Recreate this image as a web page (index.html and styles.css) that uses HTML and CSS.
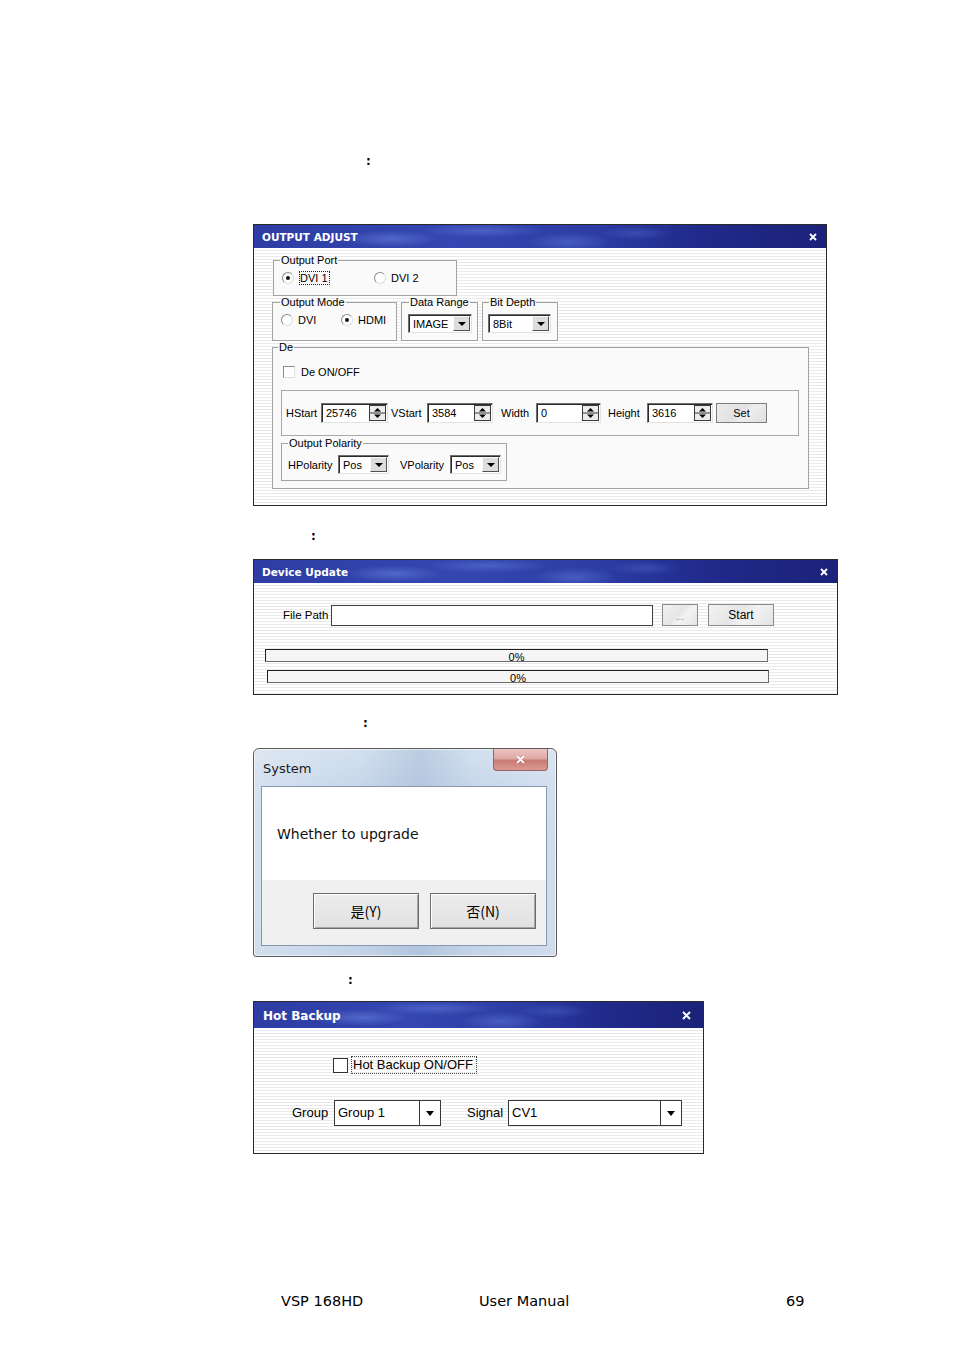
FILE: index.html
```html
<!DOCTYPE html>
<html lang="en">
<head>
<meta charset="utf-8">
<title>VSP 168HD User Manual</title>
<link rel="stylesheet" href="styles.css">
</head>
<body>
<div class="page">
  <p class="colon colon-1">:</p>

  <section class="win win-adjust">
    <header class="xp-title">
      <span class="xp-title-text">OUTPUT ADJUST</span>
      <svg class="xp-close" width="8" height="8" viewBox="0 0 8 8"><path d="M1 1L7 7M7 1L1 7" stroke="#fff" stroke-width="1.9"/></svg>
    </header>
    <div class="xp-body adjust-body">
      <fieldset class="grp grp-port">
        <legend>Output Port</legend>
        <div class="radio-row port-row">
          <span class="radio-item"><span class="radio on"></span><span class="focus">DVI 1</span></span>
          <span class="radio-item"><span class="radio"></span><span>DVI 2</span></span>
        </div>
      </fieldset>
      <div class="row2">
        <fieldset class="grp grp-mode">
          <legend>Output Mode</legend>
          <div class="radio-row mode-row">
            <span class="radio-item"><span class="radio"></span><span>DVI</span></span>
            <span class="radio-item"><span class="radio on"></span><span>HDMI</span></span>
          </div>
        </fieldset>
        <fieldset class="grp grp-range">
          <legend>Data Range</legend>
          <div class="select sel-image"><span class="sel-txt">IMAGE</span><span class="drop"></span></div>
        </fieldset>
        <fieldset class="grp grp-depth">
          <legend>Bit Depth</legend>
          <div class="select sel-bit"><span class="sel-txt">8Bit</span><span class="drop"></span></div>
        </fieldset>
      </div>
      <fieldset class="grp grp-de">
        <legend>De</legend>
        <div class="check-item"><span class="check"></span><span>De ON/OFF</span></div>
        <div class="de-box">
          <span class="lbl">HStart</span>
          <div class="spin"><span class="spin-txt">25746</span><svg class="spin-btn" width="17" height="16" viewBox="0 0 17 16"><rect x="0.5" y="0.5" width="16" height="15" fill="#ececec" stroke="#3a3a3a"/><path d="M1 8H16" stroke="#3a3a3a"/><path d="M5 6.5H12L8.5 3Z" fill="#000"/><path d="M5 9.5H12L8.5 13Z" fill="#000"/></svg></div>
          <span class="lbl lbl-v">VStart</span>
          <div class="spin"><span class="spin-txt">3584</span><svg class="spin-btn" width="17" height="16" viewBox="0 0 17 16"><rect x="0.5" y="0.5" width="16" height="15" fill="#ececec" stroke="#3a3a3a"/><path d="M1 8H16" stroke="#3a3a3a"/><path d="M5 6.5H12L8.5 3Z" fill="#000"/><path d="M5 9.5H12L8.5 13Z" fill="#000"/></svg></div>
          <span class="lbl lbl-w">Width</span>
          <div class="spin"><span class="spin-txt">0</span><svg class="spin-btn" width="17" height="16" viewBox="0 0 17 16"><rect x="0.5" y="0.5" width="16" height="15" fill="#ececec" stroke="#3a3a3a"/><path d="M1 8H16" stroke="#3a3a3a"/><path d="M5 6.5H12L8.5 3Z" fill="#000"/><path d="M5 9.5H12L8.5 13Z" fill="#000"/></svg></div>
          <span class="lbl lbl-h">Height</span>
          <div class="spin"><span class="spin-txt">3616</span><svg class="spin-btn" width="17" height="16" viewBox="0 0 17 16"><rect x="0.5" y="0.5" width="16" height="15" fill="#ececec" stroke="#3a3a3a"/><path d="M1 8H16" stroke="#3a3a3a"/><path d="M5 6.5H12L8.5 3Z" fill="#000"/><path d="M5 9.5H12L8.5 13Z" fill="#000"/></svg></div>
          <button class="set-btn" type="button">Set</button>
        </div>
        <fieldset class="grp grp-pol">
          <legend>Output Polarity</legend>
          <div class="pol-row">
            <span class="lbl">HPolarity</span>
            <div class="select sel-pol"><span class="sel-txt">Pos</span><span class="drop"></span></div>
            <span class="lbl lbl-vp">VPolarity</span>
            <div class="select sel-pol"><span class="sel-txt">Pos</span><span class="drop"></span></div>
          </div>
        </fieldset>
      </fieldset>
    </div>
  </section>

  <p class="colon colon-2">:</p>

  <section class="win win-update">
    <header class="xp-title">
      <span class="xp-title-text">Device Update</span>
      <svg class="xp-close" width="8" height="8" viewBox="0 0 8 8"><path d="M1 1L7 7M7 1L1 7" stroke="#fff" stroke-width="1.9"/></svg>
    </header>
    <div class="xp-body update-body">
      <div class="file-row">
        <span class="file-lbl">File Path</span>
        <div class="file-input"></div>
        <button class="btn-flat btn-dots" type="button">...</button>
        <button class="btn-flat btn-start" type="button">Start</button>
      </div>
      <div class="bar bar-1"><span>0%</span></div>
      <div class="bar bar-2"><span>0%</span></div>
    </div>
  </section>

  <p class="colon colon-3">:</p>

  <section class="sys">
    <header class="sys-title">
      <span class="sys-title-text">System</span>
      <span class="sys-close"><svg width="11" height="9" viewBox="0 0 11 9"><path d="M2 1L9 8M9 1L2 8" stroke="#7a3a36" stroke-width="3" opacity="0.35"/><path d="M2 1L9 8M9 1L2 8" stroke="#fff" stroke-width="1.8"/></svg></span>
    </header>
    <div class="sys-client">
      <div class="sys-msg">Whether to upgrade</div>
      <div class="sys-actions">
        <button class="sys-btn" type="button">是(Y)</button>
        <button class="sys-btn" type="button">否(N)</button>
      </div>
    </div>
  </section>

  <p class="colon colon-4">:</p>

  <section class="win win-hot">
    <header class="xp-title hot-title">
      <span class="xp-title-text">Hot Backup</span>
      <svg class="xp-close" width="9" height="9" viewBox="0 0 9 9"><path d="M1 1L8 8M8 1L1 8" stroke="#fff" stroke-width="2"/></svg>
    </header>
    <div class="xp-body hot-body">
      <div class="hot-check"><span class="hot-box"></span><span class="hot-focus">Hot Backup ON/OFF</span></div>
      <div class="hot-row">
        <span class="hot-lbl">Group</span>
        <div class="hot-select hs-group"><span class="sel-txt">Group 1</span><span class="hot-drop"></span></div>
        <span class="hot-lbl hot-lbl-sig">Signal</span>
        <div class="hot-select hs-signal"><span class="sel-txt">CV1</span><span class="hot-drop"></span></div>
      </div>
    </div>
  </section>

  <footer class="foot">
    <span>VSP 168HD</span>
    <span>User Manual</span>
    <span>69</span>
  </footer>
</div>
</body>
</html>
```

FILE: styles.css
```css
* { box-sizing: border-box; }
html, body { margin: 0; padding: 0; background: #fff; }
body { font-family: "Liberation Sans", Arial, sans-serif; color: #000; }

.page { width: 954px; height: 1350px; padding-top: 153px; overflow: hidden; }

.colon { margin: 0; height: 16px; font: bold 12px/16px "DejaVu Sans", sans-serif; }
.colon-1 { margin-left: 366px; }
.colon-2 { margin-left: 311px; margin-top: 22px; }
.colon-3 { margin-left: 363px; margin-top: 20px; }
.colon-4 { margin-left: 348px; margin-top: 15px; }

/* ---------- XP style windows ---------- */
.win { margin-left: 253px; border: 1px solid #2a2a2a; background: #fff; display: flex; flex-direction: column; }
.win-adjust { width: 574px; height: 282px; margin-top: 55px; }
.win-update { width: 585px; height: 136px; margin-top: 15px; }
.win-hot { width: 451px; height: 153px; margin-top: 13px; }

.xp-title {
  height: 23px; flex: none;
  display: flex; align-items: center; justify-content: space-between;
  padding: 1px 9px 0 8px;
  color: #fff;
  background:
    radial-gradient(ellipse 70px 12px at 24% 60%, rgba(120,150,235,.45), transparent 70%),
    radial-gradient(ellipse 90px 10px at 40% 25%, rgba(110,140,230,.40), transparent 70%),
    radial-gradient(ellipse 60px 14px at 55% 75%, rgba(100,130,225,.45), transparent 70%),
    radial-gradient(ellipse 50px 10px at 67% 35%, rgba(90,120,215,.35), transparent 70%),
    linear-gradient(90deg, #2d3da4 0%, #3446b1 35%, #2c3ca3 60%, #202a8a 78%, #1b2279 100%);
}
.xp-title-text { font: bold 10.5px/1 "DejaVu Sans", sans-serif; }
.xp-close { display: block; }
.hot-title { height: 26px; padding: 1px 12px 0 9px; }
.hot-title .xp-title-text { font-size: 12px; }

.xp-body {
  flex: 1;
  background: repeating-linear-gradient(180deg, #ffffff 0, #ffffff 2px, #eaeaea 2px, #eaeaea 3px);
  font-size: 11px; line-height: 12px;
}

/* ---------- group boxes ---------- */
.grp { margin: 0; min-width: 0; border: 1px solid #a3a3a3; background: #fafafa; }
.grp legend { padding: 0 1px; font-size: 11px; line-height: 12px; }

.adjust-body { padding: 6px 0 0 18px; }
.grp-port { width: 184px; margin-left: 1px; padding: 4px 6px 9px 8px; }
.grp-port legend { margin-left: -2px; }

.row2 { display: flex; gap: 4px; }
.grp-mode { width: 125px; padding: 4px 6px 7px 8px; }
.grp-mode legend { margin-left: -1px; }
.grp-range { width: 77px; padding: 6px 5px 7px 6px; }
.grp-range legend { margin-left: 1px; }
.grp-depth { width: 76px; padding: 6px 5px 7px 5px; }
.grp-depth legend { margin-left: 1px; }

.grp-de { width: 537px; padding: 11px 9px 7px 8px; }
.grp-de legend { margin-left: -3px; }
.grp-pol { width: 226px; margin-top: 1px; padding: 6px 4px 6px 6px; }
.grp-pol legend { margin-left: 0; }

/* ---------- radios & checks ---------- */
.radio-row { display: grid; height: 16px; align-items: center; }
.port-row { grid-template-columns: 92px auto; }
.mode-row { grid-template-columns: 60px auto; }
.radio-item { display: flex; align-items: center; gap: 5px; }
.radio {
  flex: none; width: 12px; height: 12px; border-radius: 50%;
  background: #fff; border: 1px solid; border-color: #8a8a8a #dedede #dedede #8a8a8a;
  position: relative;
}
.radio.on::after {
  content: ""; position: absolute; left: 3px; top: 3px;
  width: 4px; height: 4px; border-radius: 50%; background: #111;
}
.focus { border: 1px dotted #222; padding: 0 1px 0 0; line-height: 12px; }

.check-item { display: flex; align-items: center; gap: 6px; height: 16px; margin-left: 2px; }
.check { width: 12px; height: 12px; background: #fff; border: 1px solid; border-color: #8a8a8a #dedede #dedede #8a8a8a; }

/* ---------- selects ---------- */
.select {
  display: flex; align-items: center; height: 19px;
  background: #fff; border: 1px solid; border-color: #6e6e6e #e2e2e2 #e2e2e2 #6e6e6e;
  box-shadow: inset 1px 1px #2b2b2b;
  padding: 0 1px 0 4px;
}
.sel-txt { flex: 1; white-space: nowrap; }
.sel-image { width: 64px; }
.sel-bit { width: 63px; }
.sel-pol { width: 51px; }
.drop {
  flex: none; width: 17px; height: 15px;
  background: #dcdcdc; border: 1px solid; border-color: #fafafa #505050 #505050 #fafafa;
  display: flex; align-items: center; justify-content: center;
}
.drop::after {
  content: ""; width: 0; height: 0;
  border-left: 4px solid transparent; border-right: 4px solid transparent; border-top: 4px solid #000;
  margin-top: 1px;
}

/* ---------- De box ---------- */
.de-box {
  margin-top: 10px; height: 46px; width: 518px;
  border: 1px solid #a8a8a8; background: #fafafa;
  padding-left: 4px;
  display: grid; align-items: center;
  grid-template-columns: 35px 67px 39px 66px 43px 65px 46px 66px 54px;
}
.lbl { white-space: nowrap; }
.lbl-v { padding-left: 3px; }
.lbl-w { padding-left: 8px; }
.lbl-h { padding-left: 7px; }
.spin {
  display: flex; align-items: center; height: 20px;
  background: #fff; border: 1px solid; border-color: #6e6e6e #e2e2e2 #e2e2e2 #6e6e6e;
  box-shadow: inset 1px 1px #2b2b2b;
  padding: 0 1px 0 4px;
}
.spin-txt { flex: 1; }
.spin-btn { display: block; flex: none; }
.set-btn {
  justify-self: end; width: 51px; height: 20px; margin: 0; padding: 0;
  font: 11px "Liberation Sans", Arial, sans-serif; color: #000;
  border: 1px solid #7c7c7c; background: linear-gradient(135deg, #ececec, #e2e2e2 45%, #eeeeee 60%, #dedede);
}

.pol-row { display: grid; grid-template-columns: 50px 51px 61px 51px; align-items: center; }
.lbl-vp { padding-left: 11px; }

/* ---------- Device update ---------- */
.update-body { padding-top: 21px; }
.file-row { display: flex; align-items: center; height: 22px; margin-left: 29px; }
.file-lbl { width: 45px; text-align: right; margin-right: 3px; font-size: 11.5px; white-space: nowrap; flex: none; }
.file-input { width: 322px; height: 21px; background: #fff; border: 1px solid #3e3e3e; margin-right: 9px; flex: none; }
.btn-flat {
  height: 22px; margin: 0; padding: 0; flex: none;
  font: 12px "Liberation Sans", Arial, sans-serif; color: #000;
  border: 1px solid #8a8a8a;
  background: linear-gradient(135deg, #f2f2f2, #e6e6e6 45%, #f3f3f3 60%, #e3e3e3);
}
.btn-dots { width: 36px; margin-right: 10px; color: #8a8a8a; font-size: 10px; padding-top: 3px; }
.btn-start { width: 66px; }
.bar {
  height: 13px; background: #f5f5f5;
  border: 1px solid; border-color: #1e1e1e #6a6a6a #6a6a6a #1e1e1e;
  display: flex; justify-content: center; align-items: flex-end;
  font-size: 11px; line-height: 11px;
}
.bar span { margin-bottom: -2px; }
.bar-1 { width: 503px; margin: 23px 0 0 11px; }
.bar-2 { width: 502px; margin: 8px 0 0 13px; }

/* ---------- Windows 7 message box ---------- */
.sys {
  width: 304px; height: 209px; margin: 17px 0 0 253px;
  border: 1px solid #5c5c5c; border-radius: 6px 6px 3px 3px;
  box-shadow: inset 0 0 0 1px rgba(255,255,255,.55);
  background:
    linear-gradient(90deg, rgba(255,255,255,.25), rgba(255,255,255,0) 35%, rgba(120,150,190,.25) 55%, rgba(255,255,255,0) 72%, rgba(255,255,255,.2)),
    linear-gradient(180deg, #d3e0ee 0, #c7d7ea 37px, #c4d4e8 100%);
  padding: 0 9px 10px 7px;
  display: flex; flex-direction: column;
}
.sys-title { height: 37px; display: flex; flex: none; }
.sys-title-text { align-self: center; padding-left: 2px; padding-top: 2px; font: 13px/1 "DejaVu Sans", sans-serif; color: #1b1b1b; }
.sys-close {
  margin-left: auto; margin-right: -1px; width: 55px; height: 22px;
  border: 1px solid #9a6460; border-top: none; border-radius: 0 0 4px 4px;
  background: linear-gradient(180deg, #ebc3c0 0, #dfaaa6 45%, #cc7a74 55%, #d89a95 100%);
  display: flex; align-items: center; justify-content: center;
}
.sys-close svg { display: block; }
.sys-client { flex: 1; border: 1px solid #8798b0; display: flex; flex-direction: column; }
.sys-msg {
  height: 93px; background: #fff; display: flex; align-items: center;
  padding-left: 15px; font: 14px/1 "DejaVu Sans", sans-serif; color: #111;
}
.sys-actions { flex: 1; background: #f0f0f0; display: flex; gap: 11px; padding: 13px 0 0 51px; }
.sys-btn {
  width: 106px; height: 36px; margin: 0; padding: 0;
  border: 1px solid #6c6c6c;
  box-shadow: inset 1px 1px #ffffff, inset -1px -1px #a6a6a6;
  background: linear-gradient(180deg, #ececec, #e1e1e1);
  font: 14px "Noto Sans CJK SC", "Liberation Sans", sans-serif; color: #000;
}

/* ---------- Hot backup ---------- */
.hot-body { padding-top: 28px; font-size: 13px; line-height: 16px; }
.hot-check { display: flex; align-items: center; gap: 3px; height: 18px; margin-left: 79px; }
.hot-box { width: 15px; height: 15px; background: #fff; border: 1px solid #333; }
.hot-focus { border: 1px dotted #444; padding: 0 3px 0 1px; }
.hot-row { display: flex; align-items: center; height: 26px; margin-top: 26px; }
.hot-lbl { width: 80px; padding-left: 38px; }
.hot-lbl-sig { width: 67px; padding-left: 26px; }
.hot-select {
  display: flex; align-items: stretch; height: 26px;
  background: #fff; border: 1px solid #383838;
}
.hot-select .sel-txt { padding-left: 3px; display: flex; align-items: center; }
.hs-group { width: 107px; }
.hs-signal { width: 174px; }
.hot-drop {
  flex: none; width: 21px; border-left: 1px solid #383838;
  display: flex; align-items: center; justify-content: center;
}
.hot-drop::after {
  content: ""; width: 0; height: 0;
  border-left: 4px solid transparent; border-right: 4px solid transparent; border-top: 5px solid #000;
}

/* ---------- footer ---------- */
.foot {
  margin: 138px 0 0 281px; height: 18px;
  display: grid; grid-template-columns: 198px 307px auto;
  font: 14.5px/18px "DejaVu Sans", Verdana, sans-serif; color: #000;
}
```
